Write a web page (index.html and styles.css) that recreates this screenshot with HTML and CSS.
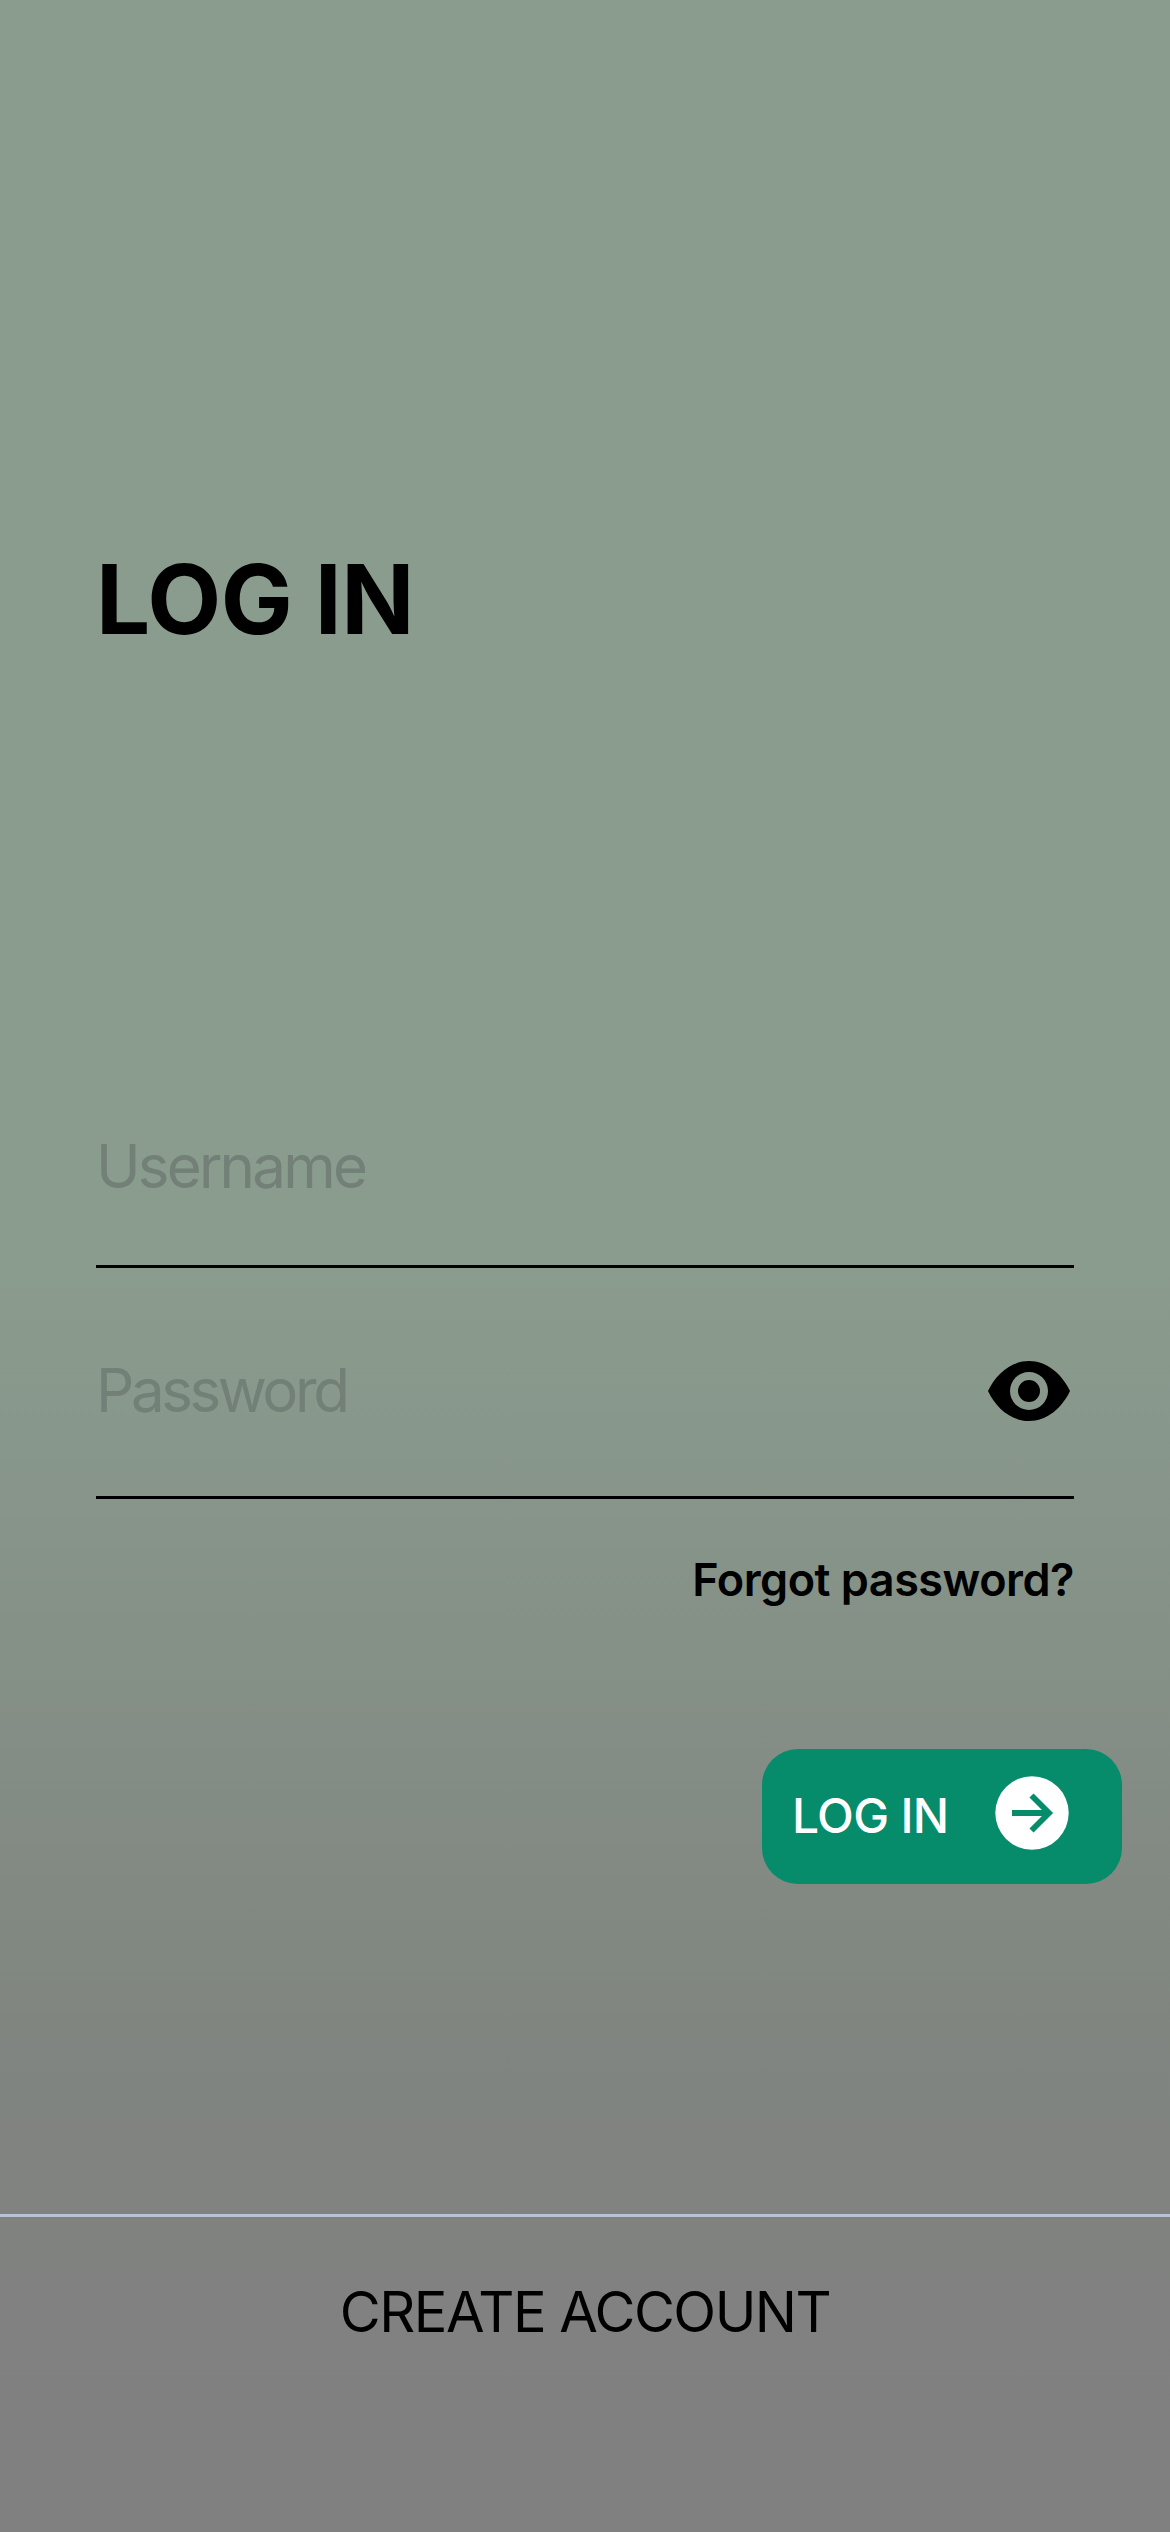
FILE: index.html
```html
<!DOCTYPE html>
<html lang="en">
<head>
<meta charset="utf-8">
<title>Log in</title>
<link rel="stylesheet" href="styles.css">
</head>
<body>
<main class="screen">
  <form class="form">
    <h1 class="title"><span>LOG IN</span></h1>
    <label class="field field-username"><span class="placeholder username">Username</span></label>
    <label class="field field-password">
      <span class="placeholder password">Password</span>
      <svg class="eye" width="82" height="60" viewBox="0 0 82 60">
        <path fill-rule="evenodd" d="M0 30C8 13 23 0 41 0S74 13 82 30C74 47 59 60 41 60S8 47 0 30ZM41 11a19 19 0 1 0 0 38a19 19 0 1 0 0-38ZM41 19a11 11 0 1 1 0 22a11 11 0 1 1 0-22Z"/>
      </svg>
    </label>
    <a class="forgot"><span>Forgot password?</span></a>
  </form>
  <button class="login" type="button">
    <span class="login-text">LOG IN</span>
    <svg class="arrow" width="74" height="74" viewBox="0 0 74 74">
      <circle cx="37" cy="37" r="36.7" fill="#fff"/>
      <path d="M17 37H54M36.5 19.5L54 37L36.5 54.5" fill="none" stroke="#068b6b" stroke-width="5.8"/>
    </svg>
  </button>
  <footer class="footer"><span>CREATE ACCOUNT</span></footer>
</main>
</body>
</html>
```
FILE: styles.css
```css
* { box-sizing: border-box; }
body { margin: 0; font-family: Inter, "Liberation Sans", sans-serif; color: #000; }
.screen {
  display: flex;
  flex-direction: column;
  width: 1170px;
  height: 2532px;
  background: linear-gradient(180deg, #8a9c8e 0%, #8a9c8e 50%, #808580 80%, #808080 95%);
}
.form { display: flex; flex-direction: column; padding: 539px 96px 0; }
.title { margin: 0; font-size: 96px; line-height: 120px; font-weight: 700; letter-spacing: -0.4px; }
.field { display: flex; justify-content: space-between; border-bottom: 3px solid #000; }
.field-username { height: 138px; margin-top: 471px; }
.field-password { height: 145px; margin-top: 86px; }
.placeholder { font-size: 60px; line-height: 72px; color: #728078; }
.username { letter-spacing: -2.8px; }
.password { letter-spacing: -3.4px; }
.eye { margin: 7px 4px 0 0; }
.forgot { align-self: flex-end; margin-top: 53px; font-size: 45px; line-height: 56px; font-weight: 600; letter-spacing: -0.5px; white-space: nowrap; }
.login {
  display: flex;
  align-self: flex-end;
  justify-content: space-between;
  width: 360px;
  height: 135px;
  margin: 141px 48px 0 0;
  padding: 27px 53px 0 30px;
  border: 0;
  border-radius: 36px;
  background: #068b6b;
  color: #fff;
  font-family: inherit;
  font-size: 48px;
  line-height: 60px;
  font-weight: 500;
}
.login-text { margin-top: 10px; letter-spacing: -0.7px; white-space: nowrap; }
.footer {
  margin-top: 330px;
  padding-top: 60px;
  border-top: 3px solid #b8c3d2;
  font-size: 56px;
  line-height: 70px;
  letter-spacing: -1.5px;
  text-align: center;
}
```
